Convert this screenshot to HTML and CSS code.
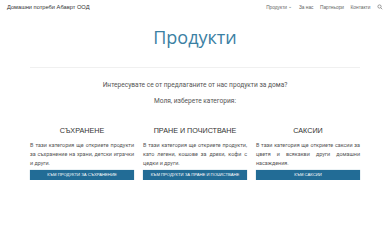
FILE: index.html
```html
<!DOCTYPE html>
<html lang="bg">
<head>
  <meta charset="UTF-8" />
  <meta name="viewport" content="width=device-width, initial-scale=1.0"/>
  <title>Продукти</title>
  <link rel="stylesheet" href="styles.css">
</head>
<body>

  <!-- Top bar -->
  <header class="topbar">
    <div class="brand">Домашни потреби Абаврт ООД</div>
    <nav class="nav">
      <a href="#">Продукти <span class="caret">&#8964;</span></a>
      <a href="#">За нас</a>
      <a href="#">Партньори</a>
      <a href="#">Контакти</a>
      <svg class="search" viewBox="0 0 24 24">
        <circle cx="10" cy="10" r="6.5"/>
        <path d="M15 15l6 6"/>
      </svg>
    </nav>
  </header>

  <main class="page">
    <h1 class="title">Продукти</h1>
    <hr class="divider" />

    <p class="intro">Интересувате се от предлаганите от нас продукти за дома?</p>
    <p class="intro">Моля, изберете категория:</p>

    <div class="cards">
      <div class="card">
        <h2>СЪХРАНЕНЕ</h2>
        <p>В тази категория ще откриете продукти за съхранение на храни, детски играчки и други.</p>
        <a class="btn" href="#">КЪМ ПРОДУКТИ ЗА СЪХРАНЕНИЕ</a>
      </div>
      <div class="card">
        <h2>ПРАНЕ И ПОЧИСТВАНЕ</h2>
        <p>В тази категория ще откриете продукти, като легени, кошове за дрехи, кофи с цедки и други.</p>
        <a class="btn" href="#">КЪМ ПРОДУКТИ ЗА ПРАНЕ И ПОЧИСТВАНЕ</a>
      </div>
      <div class="card">
        <h2>САКСИИ</h2>
        <p>В тази категория ще откриете саксии за цветя и всякакви други домашни насаждения.</p>
        <a class="btn" href="#">КЪМ САКСИИ</a>
      </div>
    </div>
  </main>

</body>
</html>
```

FILE: styles.css
```css
body {
  margin: 0;
  padding: 0;
  background: #fff;
  color: #333;
  font-family: "Liberation Sans", Arial, sans-serif;
}

.topbar {
  height: 14px;
  padding: 0 7px;
  display: flex;
  justify-content: space-between;
  align-items: center;
}

.brand {
  font-size: 5.7px;
  color: #333;
}

.nav {
  display: flex;
  align-items: center;
  gap: 6.5px;
  font-size: 4.8px;
}

.nav a {
  color: #666;
  text-decoration: none;
}

.nav .caret {
  font-size: 5px;
  position: relative;
  top: -1px;
}

.search {
  width: 6px;
  height: 6px;
  fill: none;
  stroke: #666;
  stroke-width: 2.5;
}

.page {
  width: 330px;
  margin: 0 auto;
}

.title {
  margin: 12px 0 0;
  text-align: center;
  font-family: "Open Sans", sans-serif;
  font-weight: 400;
  font-size: 18px;
  line-height: 22px;
  color: #3a80a3;
}

.divider {
  margin: 19px 0 0;
  border: 0;
  border-top: 1px solid #f0f0f0;
}

.intro {
  margin: 0;
  text-align: center;
  font-family: Roboto, sans-serif;
  font-size: 6.6px;
  line-height: 16px;
  color: #555;
}

.intro:first-of-type {
  margin-top: 9px;
}

.cards {
  margin-top: 17px;
  display: grid;
  grid-template-columns: repeat(3, 1fr);
  gap: 9px;
}

.card h2 {
  margin: 0;
  text-align: center;
  font-weight: 400;
  font-size: 7.2px;
  line-height: 10px;
  color: #333;
}

.card p {
  margin: 5px 0 2px;
  font-family: Roboto, sans-serif;
  font-size: 5.4px;
  line-height: 9px;
  text-align: justify;
  color: #555;
}

.btn {
  display: block;
  height: 10px;
  line-height: 10px;
  text-align: center;
  background: #226c96;
  color: #fff;
  text-decoration: none;
  font-size: 4.2px;
  box-shadow: 0 0 1px rgba(34, 108, 150, 0.5);
}
```
